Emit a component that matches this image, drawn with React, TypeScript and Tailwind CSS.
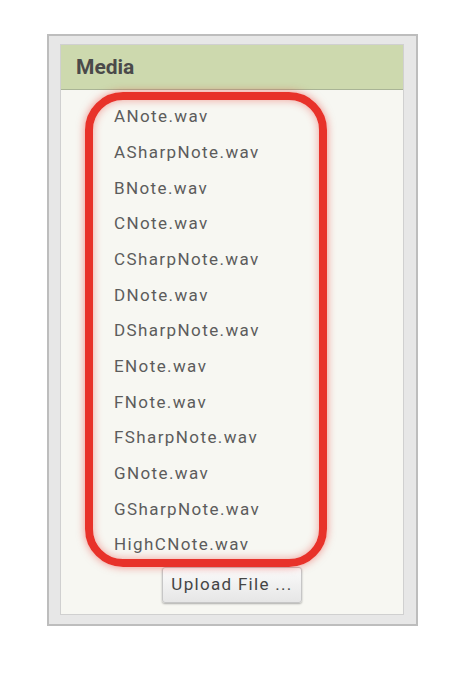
import React from "react";

const files = [
  "ANote.wav",
  "ASharpNote.wav",
  "BNote.wav",
  "CNote.wav",
  "CSharpNote.wav",
  "DNote.wav",
  "DSharpNote.wav",
  "ENote.wav",
  "FNote.wav",
  "FSharpNote.wav",
  "GNote.wav",
  "GSharpNote.wav",
  "HighCNote.wav",
];

export default function App() {
  return (
    <div
      className="relative w-[470px] h-[674px] bg-white pt-[34px] pl-[47px]"
      style={{ fontFamily: "Roboto, 'Liberation Sans', sans-serif" }}
    >
      <div className="w-[371px] border-2 border-[#bdbdbd] bg-[#e7e7e7] pt-[8px] pl-[11px] pr-[12px] pb-[9px]">
        <div className="w-[344px] border border-[#d0d0d0] bg-[#f7f7f2] flex flex-col">
          <div className="h-[45px] bg-[#cdd9ae] border-b border-[#a9b496] flex items-center pl-[15px]">
            <span className="text-[21px] font-bold text-[#4a4a4a] leading-none">Media</span>
          </div>
          <div className="flex flex-col pt-[9px] pl-[53px]">
            {files.map((f) => (
              <div
                key={f}
                className="h-[35.67px] flex items-center text-[17px] tracking-[1.4px] text-[#5c5c5c] leading-none"
              >
                {f}
              </div>
            ))}
          </div>
          <div className="flex justify-center mt-[4px] pb-[11px]">
            <div className="w-[140px] h-[36px] flex items-center justify-center rounded-[3px] border border-[#c6c6c6] bg-gradient-to-b from-[#fbfbfb] to-[#e6e6e6] shadow-[0_1px_2px_rgba(0,0,0,0.3)] text-[17px] tracking-[1.3px] text-[#454545]">
              Upload File ...
            </div>
          </div>
        </div>
      </div>
      <div className="absolute left-[85px] top-[92px] w-[242px] h-[475px] border-[8px] border-[#e8322a] rounded-[38px] shadow-[0_0_8px_rgba(232,50,42,0.55),inset_0_0_8px_rgba(232,50,42,0.45)]" />
    </div>
  );
}
